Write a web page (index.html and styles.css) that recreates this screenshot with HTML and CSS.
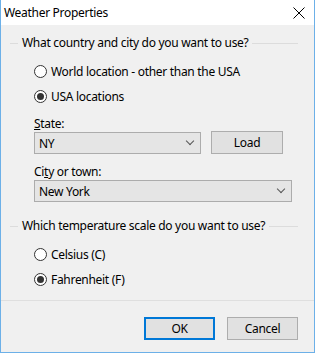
FILE: index.html
```html
<!DOCTYPE html>
<html lang="en">
  <head>
    <meta charset="UTF-8" />
    <title>Weather Properties</title>
    <link rel="stylesheet" href="styles.css">
  </head>
  <body>
    <div class="window">
      <div class="titlebar">
        <span class="title">Weather Properties</span>
        <svg class="close" width="12" height="12" viewBox="0 0 12 12">
          <path d="M0.5 0.5 L11.5 11.5 M11.5 0.5 L0.5 11.5" stroke="#000" stroke-width="1" fill="none" />
        </svg>
      </div>
      <div class="content">
        <div class="group-head first">
          <span class="line short"></span>
          <span class="group-text">What country and city do you want to use?</span>
          <span class="line long"></span>
        </div>
        <div class="radio-row first">
          <span class="radio"></span>
          <span>World location - other than the USA</span>
        </div>
        <div class="radio-row">
          <span class="radio checked"></span>
          <span>USA locations</span>
        </div>

        <div class="field-label state-label"><u>S</u>tate:</div>
        <div class="field-row">
          <div class="select state-select">
            <span>NY</span>
            <span class="chevron"></span>
          </div>
          <button class="btn load-btn">Load</button>
        </div>

        <div class="field-label city-label">Ci<u>t</u>y or town:</div>
        <div class="select city-select">
          <span>New York</span>
          <span class="chevron"></span>
        </div>

        <div class="group-head second">
          <span class="line short"></span>
          <span class="group-text">Which temperature scale do you want to use?</span>
          <span class="line long"></span>
        </div>
        <div class="radio-row first">
          <span class="radio"></span>
          <span>Celsius (C)</span>
        </div>
        <div class="radio-row">
          <span class="radio checked"></span>
          <span>Fahrenheit (F)</span>
        </div>
      </div>
      <div class="separator"></div>
      <div class="footer">
        <button class="btn default">OK</button>
        <button class="btn">Cancel</button>
      </div>
    </div>
  </body>
</html>
```

FILE: styles.css
```css
:root {
  --face: #f0f0f0;
  --frame: #6cb0e8;
  --control: #e5e5e5;
  --control-border: #acacac;
}

body {
  margin: 0;
  font-family: 'Noto Sans', sans-serif;
  font-size: 12px;
  letter-spacing: -0.3px;
  color: #000;
  background: #fff;
}

.window {
  width: 315px;
  height: 353px;
  box-sizing: border-box;
  border: 1px solid var(--frame);
  border-top: none;
  background: var(--face);
}

.titlebar {
  height: 25px;
  background: #fff;
  display: flex;
  align-items: center;
  justify-content: space-between;
  padding: 0 9px 0 3px;
}

.title {
  font-size: 12px;
  line-height: 16px;
}

.close {
  display: block;
}

.content {
  padding: 0 0 0 33px;
}

.group-head {
  display: flex;
  align-items: center;
  height: 16px;
  margin-left: -24px;
  width: 288px;
}

.group-head.first {
  margin-top: 10px;
}

.group-head.second {
  margin-top: 16px;
}

.group-text {
  white-space: nowrap;
  padding: 0 4px;
  line-height: 16px;
}

.line {
  height: 1px;
  background: #dcdcdc;
}

.line.short {
  width: 8px;
}

.line.long {
  flex: 1;
}

.radio-row {
  display: flex;
  align-items: center;
  height: 25px;
  gap: 4px;
}

.radio-row.first {
  margin-top: 8px;
}

.radio {
  width: 13px;
  height: 13px;
  box-sizing: border-box;
  border: 1px solid #333;
  border-radius: 50%;
  background: #fff;
  display: flex;
  align-items: center;
  justify-content: center;
}

.radio.checked::after {
  content: "";
  width: 7px;
  height: 7px;
  border-radius: 50%;
  background: #333;
}

.field-label {
  line-height: 16px;
  height: 16px;
}

.state-label {
  margin-top: 7px;
}

.city-label {
  margin-top: 10px;
}

.field-row {
  display: flex;
  align-items: center;
  gap: 10px;
}

.select {
  height: 22px;
  box-sizing: border-box;
  border: 1px solid var(--control-border);
  background: var(--control);
  display: flex;
  align-items: center;
  justify-content: space-between;
  padding: 0 7px 0 4px;
}

.state-select {
  width: 167px;
}

.city-select {
  width: 258px;
}

.chevron {
  width: 5px;
  height: 5px;
  border-right: 1px solid #555;
  border-bottom: 1px solid #555;
  transform: rotate(45deg);
  margin-top: -4px;
}

.btn {
  font-family: inherit;
  font-size: 12px;
  letter-spacing: inherit;
  color: #000;
  height: 23px;
  box-sizing: border-box;
  border: 1px solid #adadad;
  background: #e1e1e1;
  padding: 0;
}

.load-btn {
  width: 72px;
  margin-top: -1px;
}

.separator {
  height: 1px;
  background: #dfdfdf;
  margin-top: 8px;
}

.footer {
  display: flex;
  justify-content: flex-end;
  gap: 12px;
  padding: 16px 16px 0 0;
}

.footer .btn {
  width: 71px;
}

.btn.default {
  border: 2px solid #0078d7;
}
```
